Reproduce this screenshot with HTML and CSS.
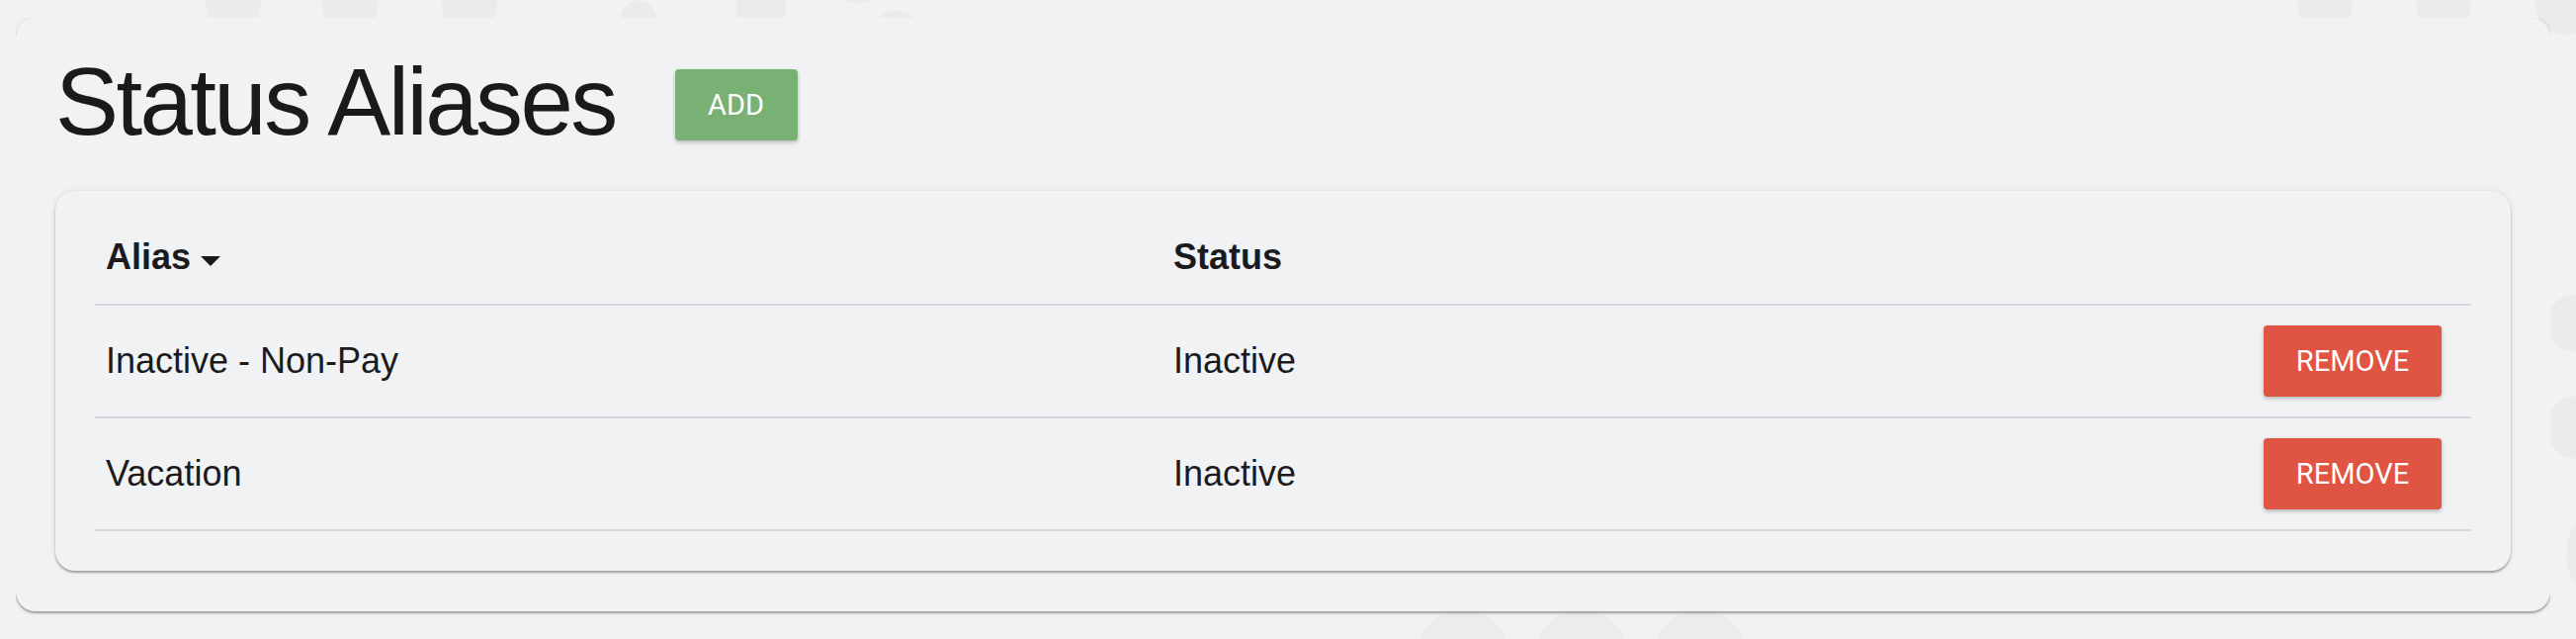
FILE: index.html
```html
<!DOCTYPE html>
<html lang="en">
<head>
<meta charset="utf-8">
<title>Status Aliases</title>
<link rel="stylesheet" href="styles.css">
</head>
<body>
<main class="page-card">
  <header class="page-header">
    <h1 class="page-title">Status Aliases</h1>
    <button class="btn btn-add" type="button">ADD</button>
  </header>
  <section class="table-card">
    <div class="alias-table" role="table">
      <div class="row row-head" role="row">
        <div class="cell" role="columnheader">Alias<svg class="sort-icon" width="20" height="10" viewBox="0 0 20 10" aria-hidden="true"><path d="M0 0H20L10 10Z"/></svg></div>
        <div class="cell" role="columnheader">Status</div>
        <div class="cell cell-action" role="columnheader"></div>
      </div>
      <div class="row" role="row">
        <div class="cell" role="cell">Inactive - Non-Pay</div>
        <div class="cell" role="cell">Inactive</div>
        <div class="cell cell-action" role="cell"><button class="btn btn-remove" type="button">REMOVE</button></div>
      </div>
      <div class="row" role="row">
        <div class="cell" role="cell">Vacation</div>
        <div class="cell" role="cell">Inactive</div>
        <div class="cell cell-action" role="cell"><button class="btn btn-remove" type="button">REMOVE</button></div>
      </div>
    </div>
  </section>
</main>
</body>
</html>
```

FILE: styles.css
```css
html, body {
  height: 100%;
}

body {
  margin: 18px 26px 0 16px;
  font-family: "Liberation Sans", Arial, sans-serif;
  color: #1b1b1d;
  background-color: #f2f2f3;
  background-repeat: no-repeat;
  background-image:
    radial-gradient(29px 40px at 236px 0px, #ebebeb 96%, #ebebeb00 100%),
    radial-gradient(29px 40px at 354px 0px, #ebebeb 96%, #ebebeb00 100%),
    radial-gradient(29px 40px at 475px 0px, #ebebeb 96%, #ebebeb00 100%),
    radial-gradient(20px 24px at 646px 24px, #ebebeb 96%, #ebebeb00 100%),
    radial-gradient(26px 30px at 770px 8px, #ebebeb 96%, #ebebeb00 100%),
    radial-gradient(20px 18px at 868px -14px, #ebebeb 96%, #ebebeb00 100%),
    radial-gradient(24px 22px at 907px 32px, #ebebeb 96%, #ebebeb00 100%),
    radial-gradient(29px 40px at 2352px 0px, #ebebeb 96%, #ebebeb00 100%),
    radial-gradient(29px 40px at 2472px 0px, #ebebeb 96%, #ebebeb00 100%),
    radial-gradient(32px 36px at 2595px 0px, #ebebeb 96%, #ebebeb00 100%),
    radial-gradient(30px 30px at 2606px 327px, #ebebeb 96%, #ebebeb00 100%),
    radial-gradient(30px 32px at 2606px 432px, #ebebeb 96%, #ebebeb00 100%),
    radial-gradient(24px 40px at 2620px 560px, #ebebeb 96%, #ebebeb00 100%),
    radial-gradient(47px 44px at 1480px 660px, #ececec 96%, #ececec00 100%),
    radial-gradient(47px 44px at 1600px 660px, #ececec 96%, #ececec00 100%),
    radial-gradient(47px 44px at 1720px 660px, #ececec 96%, #ececec00 100%);
}

.page-card {
  background: #f1f2f4;
  border-radius: 20px;
  padding: 37px 40px 41px;
  box-shadow: 0 2px 2px rgba(0, 0, 0, 0.3), 0 0 6px rgba(0, 0, 0, 0.1);
}

.page-header {
  display: flex;
  align-items: flex-start;
  gap: 60px;
  height: 96px;
  margin-bottom: 42px;
}

.page-title {
  margin: 0;
  font-size: 96px;
  line-height: 96px;
  font-weight: 400;
  letter-spacing: -2.6px;
  color: #1a1a1a;
}

.btn {
  font-family: Roboto, "Liberation Sans", sans-serif;
  font-size: 29px;
  line-height: 1;
  color: #ffffff;
  border: 0;
  border-radius: 4px;
  height: 72px;
  padding: 0;
  box-shadow: 0 2px 4px rgba(0, 0, 0, 0.25);
  cursor: pointer;
}

.btn-add {
  width: 124px;
  margin-top: 15px;
  background: #79b073;
}

.btn-remove {
  width: 180px;
  background: #e05444;
}

.table-card {
  background: #f1f2f4;
  border-radius: 20px;
  padding: 20px 40px 40px;
  box-shadow: 0 2px 2px rgba(0, 0, 0, 0.3), 0 0 6px rgba(0, 0, 0, 0.1);
}

.row {
  display: grid;
  grid-template-columns: 1080px 1fr 210px;
  height: 114px;
  box-sizing: border-box;
  border-bottom: 2px solid #d6d7da;
}

.row-head {
  height: 96px;
  font-weight: 700;
}

.cell {
  display: flex;
  align-items: center;
  padding-left: 11px;
  font-size: 36px;
}

.cell-action {
  justify-content: flex-end;
  padding: 0 30px 0 0;
}

.sort-icon {
  margin-left: 10px;
  margin-top: 8px;
  fill: #1a1a1a;
}
```
